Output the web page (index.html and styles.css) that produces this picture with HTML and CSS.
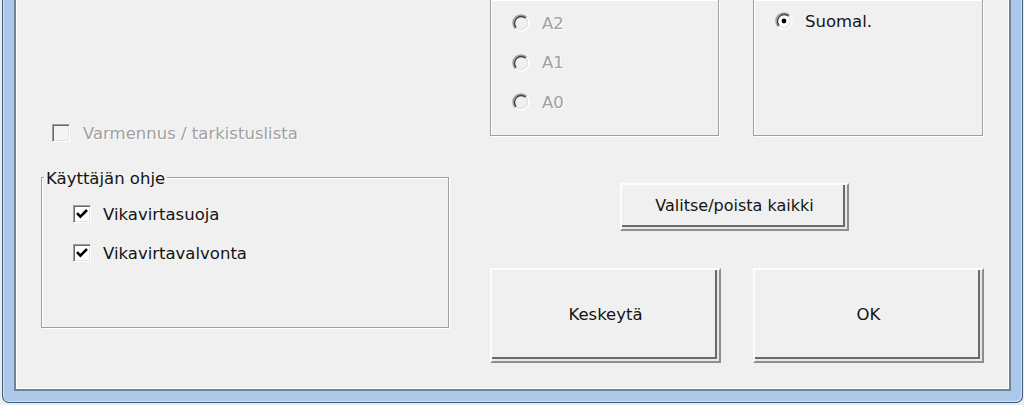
FILE: index.html
```html
<!DOCTYPE html>
<html lang="fi">
<head>
<meta charset="utf-8">
<title>Dialogi</title>
<link rel="stylesheet" href="styles.css">
</head>
<body>
<div class="window">
  <div class="frame">
    <div class="content">
      <div class="col-left">
        <div class="check disabled verify">
          <span class="box"></span>
          <span class="lbl">Varmennus / tarkistuslista</span>
        </div>
        <fieldset class="group help">
          <legend>Käyttäjän ohje</legend>
          <div class="rows">
            <div class="check">
              <span class="box"><svg viewBox="0 0 16 16"><path d="M3 7.2 L6.4 10.6 L13 4" /></svg></span>
              <span class="lbl">Vikavirtasuoja</span>
            </div>
            <div class="check">
              <span class="box"><svg viewBox="0 0 16 16"><path d="M3 7.2 L6.4 10.6 L13 4" /></svg></span>
              <span class="lbl">Vikavirtavalvonta</span>
            </div>
          </div>
        </fieldset>
      </div>
      <div class="col-right">
        <div class="groups">
          <div class="group open size">
            <div class="radio disabled">
              <svg class="rico" viewBox="0 0 18 18"><circle cx="9" cy="9" r="7" class="fill"/><path class="o-dark" d="M3.34 14.66A8 8 0 0 1 14.66 3.34"/><path class="i-dark" d="M4.2 13.8A6.8 6.8 0 0 1 13.8 4.2"/><path class="o-light" d="M14.66 3.34A8 8 0 0 1 3.34 14.66"/><path class="i-light" d="M13.8 4.2A6.8 6.8 0 0 1 4.2 13.8"/></svg>
              <span class="lbl">A2</span>
            </div>
            <div class="radio disabled">
              <svg class="rico" viewBox="0 0 18 18"><circle cx="9" cy="9" r="7" class="fill"/><path class="o-dark" d="M3.34 14.66A8 8 0 0 1 14.66 3.34"/><path class="i-dark" d="M4.2 13.8A6.8 6.8 0 0 1 13.8 4.2"/><path class="o-light" d="M14.66 3.34A8 8 0 0 1 3.34 14.66"/><path class="i-light" d="M13.8 4.2A6.8 6.8 0 0 1 4.2 13.8"/></svg>
              <span class="lbl">A1</span>
            </div>
            <div class="radio disabled">
              <svg class="rico" viewBox="0 0 18 18"><circle cx="9" cy="9" r="7" class="fill"/><path class="o-dark" d="M3.34 14.66A8 8 0 0 1 14.66 3.34"/><path class="i-dark" d="M4.2 13.8A6.8 6.8 0 0 1 13.8 4.2"/><path class="o-light" d="M14.66 3.34A8 8 0 0 1 3.34 14.66"/><path class="i-light" d="M13.8 4.2A6.8 6.8 0 0 1 4.2 13.8"/></svg>
              <span class="lbl">A0</span>
            </div>
          </div>
          <div class="group open lang">
            <div class="radio">
              <svg class="rico" viewBox="0 0 18 18"><circle cx="9" cy="9" r="7" class="fill"/><path class="o-dark" d="M3.34 14.66A8 8 0 0 1 14.66 3.34"/><path class="i-dark" d="M4.2 13.8A6.8 6.8 0 0 1 13.8 4.2"/><path class="o-light" d="M14.66 3.34A8 8 0 0 1 3.34 14.66"/><path class="i-light" d="M13.8 4.2A6.8 6.8 0 0 1 4.2 13.8"/><circle cx="9" cy="9" r="2.4" class="dot"/></svg>
              <span class="lbl">Suomal.</span>
            </div>
          </div>
        </div>
        <button class="btn btn-toggle" type="button">Valitse/poista kaikki</button>
        <div class="actions">
          <button class="btn btn-big" type="button">Keskeytä</button>
          <button class="btn btn-big" type="button">OK</button>
        </div>
      </div>
    </div>
  </div>
</div>
</body>
</html>
```
FILE: styles.css
```css
html, body {
  margin: 0;
  height: 405px;
  overflow: hidden;
  background: #e8edf2;
}
body {
  font-family: "DejaVu Sans", "Liberation Sans", sans-serif;
  font-size: 16.5px;
  color: #141414;
}
.window {
  box-sizing: border-box;
  margin-left: 2px;
  width: 1021px;
  height: 403px;
  border: 1px solid #3f5878;
  border-top: none;
  border-radius: 0 0 7px 7px;
  background: #abc7ea;
  padding: 0 11px 11px;
  box-shadow: inset 1px 0 #d2e2f5, inset -1px -1px #d2e2f5;
}
.frame {
  box-sizing: border-box;
  height: 100%;
  border: 2px solid #6f8299;
  border-top: none;
}
.content {
  box-sizing: border-box;
  height: 100%;
  border: 1px solid #fff;
  border-top: none;
  background: #f0f0f0;
  display: flex;
  padding-left: 24px;
}
.col-left {
  flex: none;
  width: 408px;
  display: flex;
  flex-direction: column;
}
.col-right {
  flex: none;
  width: 494px;
  margin-left: 41px;
  display: flex;
  flex-direction: column;
  align-items: flex-start;
}

/* checkboxes */
.check {
  display: flex;
  align-items: center;
  height: 22px;
  gap: 12px;
  white-space: nowrap;
}
.check .box {
  flex: none;
  box-sizing: border-box;
  width: 18px;
  height: 18px;
  border: 1px solid;
  border-color: #a0a0a0 #fff #fff #a0a0a0;
  box-shadow: inset 1px 1px #696969, inset -1px -1px #e3e3e3;
  background: #fff;
  display: flex;
}
.check .box svg {
  width: 16px;
  height: 16px;
}
.check .box path {
  fill: none;
  stroke: #000;
  stroke-width: 2.6;
  stroke-linejoin: miter;
}
.check.disabled .box {
  background: #f4f4f4;
}
.disabled .lbl {
  color: #a0a0a0;
  text-shadow: 1px 1px 0 #fff;
}
.verify {
  margin-top: 122px;
  margin-left: 11px;
  gap: 13px;
}

/* group boxes */
.group {
  box-sizing: border-box;
  border: 1px solid #a0a0a0;
  box-shadow: inset 1px 1px #fff, 1px 1px #fff;
}
.help {
  margin: 22px 0 0;
  height: 162px;
  padding: 15px 0 0 31px;
  min-width: 0;
}
.help legend {
  margin-left: -29px;
  padding: 4px 2px 0;
  line-height: 18px;
  font-size: 16.5px;
  color: #141414;
}
.rows {
  display: flex;
  flex-direction: column;
  gap: 17px;
}
.groups {
  display: flex;
  gap: 34px;
  height: 136px;
}
.open {
  border-top: none;
  height: 136px;
  padding-left: 21px;
  display: flex;
  flex-direction: column;
}
.size {
  width: 229px;
  padding-top: 12px;
  gap: 17.5px;
}
.lang {
  width: 230px;
  padding-top: 10px;
}

/* radios */
.radio {
  display: flex;
  align-items: center;
  height: 22px;
  gap: 12px;
}
.rico {
  flex: none;
  width: 18px;
  height: 18px;
}
.rico path {
  fill: none;
  stroke-width: 1.4;
}
.rico .fill { fill: #fff; }
.radio.disabled .rico .fill { fill: #f0f0f0; }
.rico .o-dark { stroke: #9a9a9a; }
.rico .i-dark { stroke: #404040; }
.rico .o-light { stroke: #ffffff; }
.rico .i-light { stroke: #e3e3e3; }
.rico .dot { fill: #000; }

/* buttons */
.btn {
  font-family: inherit;
  font-size: 16px;
  color: #141414;
  background: #f0f0f0;
  box-sizing: border-box;
  border-style: solid;
  border-width: 2px;
  border-color: #fdfdfd #8e8e8e #8e8e8e #fdfdfd;
  box-shadow: inset -2px -2px 0 #e8e8e8, inset -4px -4px 0 #6a6a6a;
  padding: 0 0 4px;
  margin: 0;
  cursor: default;
}
.btn-toggle {
  margin: 47px 0 0 130px;
  width: 229px;
  height: 48px;
}
.actions {
  display: flex;
  gap: 32px;
  margin-top: 37px;
}
.btn-big {
  width: 231px;
  height: 95px;
  padding-bottom: 3px;
  font-size: 16.5px;
}
```
